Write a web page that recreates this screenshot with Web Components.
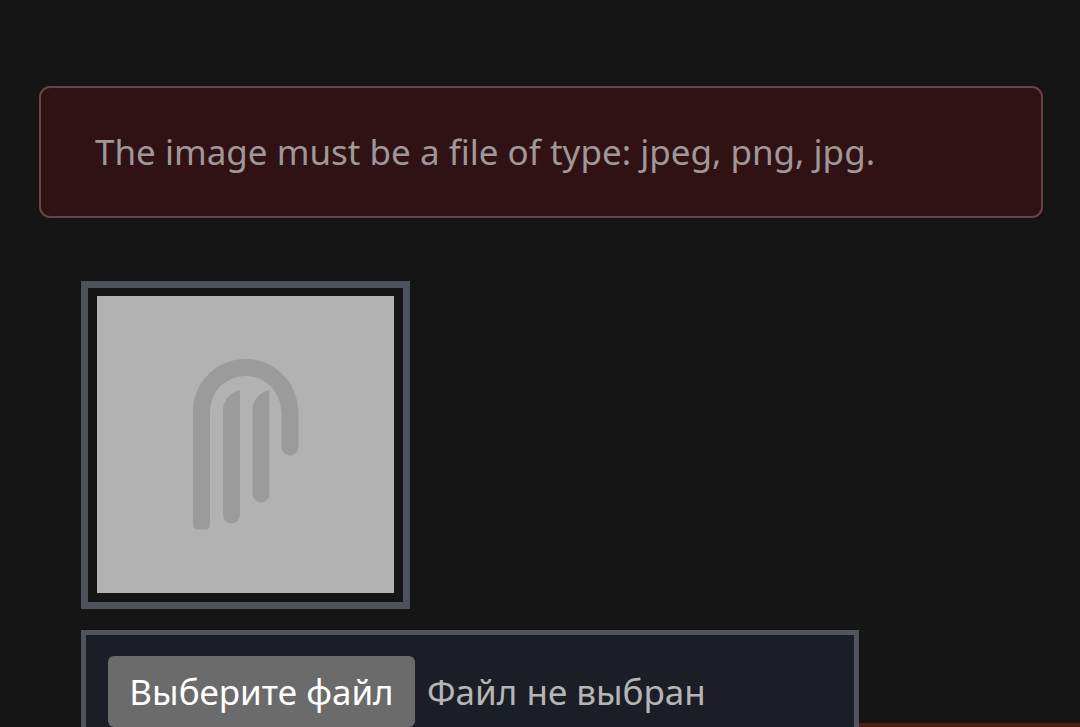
<!DOCTYPE html>
<html lang="ru">
<head>
<meta charset="utf-8">
<meta name="viewport" content="width=device-width, initial-scale=1">
<title>Upload</title>
<style>
html{background:#151515;overflow:hidden}
body{margin:0;font-family:"Noto Sans","Open Sans",sans-serif;font-size:36px;line-height:48px;color:#a19b9b}
</style>
</head>
<body>
<upload-page></upload-page>
<script>
const define=(name,html,setup)=>customElements.define(name,class extends HTMLElement{
  constructor(){
    super();
    this.attachShadow({mode:'open'}).innerHTML=html;
    if(setup)setup(this.shadowRoot);
  }
});

define('alert-box',`
<style>
:host{display:block;box-sizing:border-box;padding:40px 54px;border:2px solid #6d4148;border-radius:11px;background:#301114;color:#a09898;font-size:35px}
p{margin:0}
</style>
<p role="alert"><slot></slot></p>`);

define('image-frame',`
<style>
:host{display:block;width:fit-content;border:7px solid #4e525a;padding:8px 9px 9px}
svg{display:block;width:297px;height:297px;background:#b2b2b2}
</style>
<svg viewBox="0 0 297 297" role="img" aria-label="Placeholder" fill="#9b9b9b">
<path d="M96 116C96 86 120 63 148.500 63S201 86 201.500 116V151a8.500 8.500 0 0 1-17 0V117C184 95 168 80 148.500 80S113 95 113 117V228q0 5.500-5 5.500h-7q-5 0-5-5.500Z"/>
<path d="M126 114C126 104 134 96 143 94V219a8.500 8.500 0 0 1-17 0Z"/>
<path d="M155.500 114C155.500 104 163 96 172.500 94V198a8.500 8.500 0 0 1-17 0Z"/>
</svg>`);

define('file-field',`
<style>
:host{display:flex;box-sizing:border-box;align-items:center;gap:12px;padding:21px 22px;border:5px solid #51545c;background:#1b1e27;color:#b5b5b5;font-size:35px;white-space:nowrap}
button{box-sizing:border-box;width:307px;height:71px;padding:0;border:0;border-radius:6px;background:#6b6b6b;color:#fff;font:inherit;cursor:pointer}
</style>
<input type="file" accept="image/png,image/jpeg" aria-label="Выберите файл" hidden>
<button type="button">Выберите файл</button><output>Файл не выбран</output>`,root=>{
  const input=root.querySelector('input');
  root.querySelector('button').addEventListener('click',()=>input.click());
  input.addEventListener('change',()=>{
    root.querySelector('output').textContent=input.files.length?input.files[0].name:'Файл не выбран';
  });
});

define('upload-page',`
<style>
:host{display:block;padding:86px 37px 0 39px}
form{margin:63px -37px 0 42px}
.row{display:flex;align-items:flex-start;margin-top:21px}
file-field{flex:0 0 778px}
hr{flex:1;margin:93px 0 0;border:0;border-top:4px solid #4d1e10}
</style>
<alert-box>The image must be a file of type: jpeg, png, jpg.</alert-box>
<form>
<image-frame></image-frame>
<div class="row"><file-field></file-field><hr></div>
</form>`);
</script>
</body>
</html>
